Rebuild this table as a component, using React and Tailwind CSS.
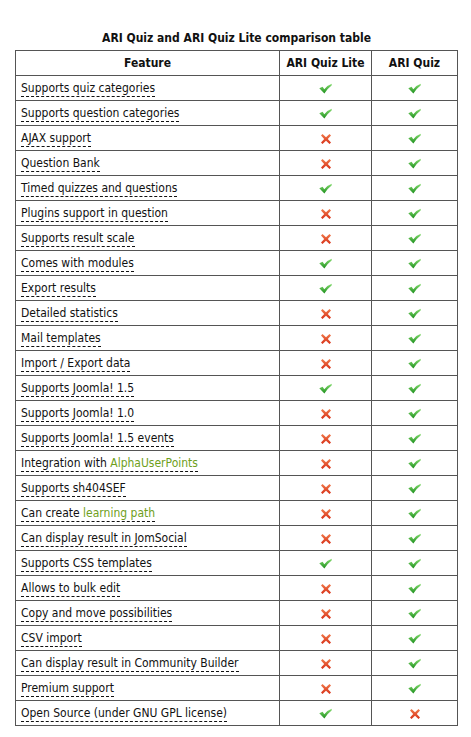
const rows = [
  ["Supports quiz categories", 1, 1],
  ["Supports question categories", 1, 1],
  ["AJAX support", 0, 1],
  ["Question Bank", 0, 1],
  ["Timed quizzes and questions", 1, 1],
  ["Plugins support in question", 0, 1],
  ["Supports result scale", 0, 1],
  ["Comes with modules", 1, 1],
  ["Export results", 1, 1],
  ["Detailed statistics", 0, 1],
  ["Mail templates", 0, 1],
  ["Import / Export data", 0, 1],
  ["Supports Joomla! 1.5", 1, 1],
  ["Supports Joomla! 1.0", 0, 1],
  ["Supports Joomla! 1.5 events", 0, 1],
  [["Integration with ", "AlphaUserPoints"], 0, 1],
  ["Supports sh404SEF", 0, 1],
  [["Can create ", "learning path"], 0, 1],
  ["Can display result in JomSocial", 0, 1],
  ["Supports CSS templates", 1, 1],
  ["Allows to bulk edit", 0, 1],
  ["Copy and move possibilities", 0, 1],
  ["CSV import", 0, 1],
  ["Can display result in Community Builder", 0, 1],
  ["Premium support", 0, 1],
  ["Open Source (under GNU GPL license)", 1, 0],
];

const Check = () => (
  <svg width="13" height="11" viewBox="0 0 13 11" className="inline-block">
    <defs>
      <linearGradient id="cg" x1="0" y1="0" x2="0" y2="1">
        <stop offset="0" stopColor="#86dc70" />
        <stop offset="1" stopColor="#1c8f1c" />
      </linearGradient>
    </defs>
    <path d="M0.3 5.2 L3.6 3.8 L5.3 6.2 Q8.5 2.2 12.8 0.8 L12.6 2.6 Q8.6 5.5 5.4 10.6 Z" fill="url(#cg)" />
  </svg>
);

const Cross = () => (
  <svg width="12" height="12" viewBox="0 0 12 12" className="inline-block">
    <defs>
      <linearGradient id="xg" x1="0" y1="0" x2="0" y2="1">
        <stop offset="0" stopColor="#f07a4a" />
        <stop offset="1" stopColor="#d8321a" />
      </linearGradient>
    </defs>
    <path d="M2.5 1 L6 4.2 L9.5 1 L11 2.5 L7.8 6 L11 9.5 L9.5 11 L6 7.8 L2.5 11 L1 9.5 L4.2 6 L1 2.5 Z" fill="url(#xg)" />
  </svg>
);

const Mark = ({ v }) => (v ? <Check /> : <Cross />);

export default function App() {
  return (
    <div className="bg-white min-h-screen pt-[30px] pl-[15px] text-[#111]" style={{ fontFamily: '"DejaVu Sans Condensed", "DejaVu Sans", sans-serif' }}>
      <div className="w-[443px] text-center font-bold text-[12px] leading-[16px] mb-[4px]">
        ARI Quiz and ARI Quiz Lite comparison table
      </div>
      <table className="w-[443px] border-collapse border border-[#555] text-[12px]">
        <thead>
          <tr className="h-[25px]">
            <th className="border border-[#555] font-bold text-[12px] w-[264px]">Feature</th>
            <th className="border border-[#555] font-bold text-[12px] w-[92px]">ARI Quiz Lite</th>
            <th className="border border-[#555] font-bold text-[12px]">ARI Quiz</th>
          </tr>
        </thead>
        <tbody>
          {rows.map(([f, a, b], i) => (
            <tr key={i} className="h-[25px]">
              <td className="border border-[#555] pl-[5px] p-0">
                <span className="border-b border-dashed border-[#111] pb-[1px]">
                  {Array.isArray(f) ? (
                    <>
                      {f[0]}
                      <span className="text-[#6fa01c]">{f[1]}</span>
                    </>
                  ) : (
                    f
                  )}
                </span>
              </td>
              <td className="border border-[#555] text-center p-0">
                <Mark v={a} />
              </td>
              <td className="border border-[#555] text-center p-0">
                <Mark v={b} />
              </td>
            </tr>
          ))}
        </tbody>
      </table>
    </div>
  );
}
